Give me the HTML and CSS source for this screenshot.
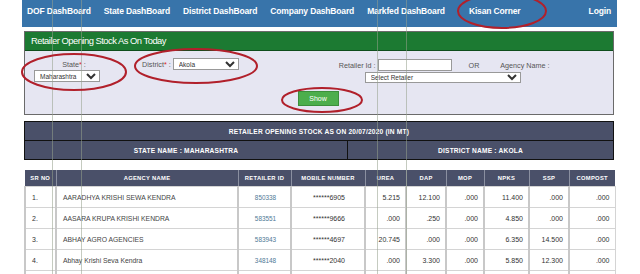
FILE: index.html
```html
<!DOCTYPE html>
<html lang="en">
<head>
    <meta charset="UTF-8">
    <meta name="viewport" content="width=device-width, initial-scale=1.0">
    <title>Retailer Opening Stock</title>
    <link rel="stylesheet" href="styles.css">
</head>
<body>

    <nav class="topnav">
        <a href="#">DOF DashBoard</a>
        <a href="#">State DashBoard</a>
        <a href="#">District DashBoard</a>
        <a href="#">Company DashBoard</a>
        <a href="#">Markfed DashBoard</a>
        <a href="#" class="kisan">Kisan Corner</a>
        <a href="#" class="login">Login</a>
    </nav>

    <div class="content">
        <div class="panel">
            <div class="panel-head">Retailer Opening Stock As On Today</div>
            <div class="panel-body">
                <div class="fields">
                    <div class="field-state">
                        <label>State<span class="req">*</span> :</label>
                        <select class="sel"><option>Maharashtra</option></select>
                    </div>
                    <div class="field-district">
                        <label>District<span class="req">*</span> :</label>
                        <select class="sel"><option>Akola</option></select>
                    </div>
                    <div class="field-retailer">
                        <div class="retailer-line">
                            <label>Retailer Id :</label>
                            <input type="text" class="txt">
                            <span class="or">OR</span>
                            <label>Agency Name :</label>
                        </div>
                        <select class="sel sel-wide"><option>Select Retailer</option></select>
                    </div>
                </div>
                <div class="actions">
                    <button class="btn-show">Show</button>
                </div>
            </div>
        </div>

        <table class="summary">
            <tr><td colspan="2">RETAILER OPENING STOCK AS ON 20/07/2020 (IN MT)</td></tr>
            <tr><td class="state-cell">STATE NAME : MAHARASHTRA</td><td>DISTRICT NAME : AKOLA</td></tr>
        </table>

        <table class="stock">
            <colgroup>
                <col style="width:31px"><col style="width:182px"><col style="width:53px"><col style="width:74px">
                <col style="width:41px"><col style="width:40px"><col style="width:38px"><col style="width:45px">
                <col style="width:40px"><col style="width:46px">
            </colgroup>
            <thead>
                <tr>
                    <th>SR NO</th><th>AGENCY NAME</th><th>RETAILER ID</th><th>MOBILE NUMBER</th>
                    <th>UREA</th><th>DAP</th><th>MOP</th><th>NPKS</th><th>SSP</th><th>COMPOST</th>
                </tr>
            </thead>
            <tbody>
                <tr>
                    <td>1.</td><td class="name">AARADHYA KRISHI SEWA KENDRA</td><td class="rid">850338</td><td class="mob">******6905</td>
                    <td class="num">5.215</td><td class="num">12.100</td><td class="num">.000</td><td class="num">11.400</td><td class="num">.000</td><td class="num">.000</td>
                </tr>
                <tr>
                    <td>2.</td><td class="name">AASARA KRUPA KRISHI KENDRA</td><td class="rid">583551</td><td class="mob">******9666</td>
                    <td class="num">.000</td><td class="num">.250</td><td class="num">.000</td><td class="num">4.850</td><td class="num">.000</td><td class="num">.000</td>
                </tr>
                <tr>
                    <td>3.</td><td class="name">ABHAY AGRO AGENCIES</td><td class="rid">583943</td><td class="mob">******4697</td>
                    <td class="num">20.745</td><td class="num">.000</td><td class="num">.000</td><td class="num">6.350</td><td class="num">14.500</td><td class="num">.000</td>
                </tr>
                <tr>
                    <td>4.</td><td class="name">Abhay Krishi Seva Kendra</td><td class="rid">348148</td><td class="mob">******2040</td>
                    <td class="num">.000</td><td class="num">3.300</td><td class="num">.000</td><td class="num">5.850</td><td class="num">12.300</td><td class="num">.000</td>
                </tr>
                <tr>
                    <td></td><td class="name"></td><td class="rid"></td><td></td>
                    <td class="num"></td><td class="num"></td><td class="num"></td><td class="num"></td><td class="num"></td><td class="num"></td>
                </tr>
            </tbody>
        </table>
    </div>

    <!-- guide lines and red marks drawn over the screenshot -->
    <div class="guide g1"></div>
    <div class="guide g2"></div>
    <div class="guide g3"></div>
    <div class="guide g4"></div>

    <svg class="marks" width="640" height="274" viewBox="0 0 640 274">
        <ellipse cx="502" cy="11" rx="44" ry="17" />
        <ellipse cx="74" cy="72" rx="52" ry="18" />
        <ellipse cx="196" cy="66" rx="61" ry="17" />
        <ellipse cx="322" cy="100" rx="40" ry="12" />
    </svg>

</body>
</html>
```

FILE: styles.css
```css
body {
    margin: 0;
    font-family: "Liberation Sans", Arial, sans-serif;
    background-color: #fff;
    width: 640px;
    height: 274px;
    overflow: hidden;
}
.topnav {
    margin-left: 22px;
    width: 595px;
    height: 27px;
    background-color: #3874aa;
    display: flex;
    gap: 13px;
    padding: 0 6px 0 5px;
    box-sizing: border-box;
    align-items: flex-start;
}
.topnav a {
    color: #fff;
    font-weight: bold;
    font-size: 8.5px;
    letter-spacing: -0.15px;
    text-decoration: none;
    padding-top: 6px;
}
.topnav .kisan {
    margin-left: 11px;
}
.topnav .login {
    margin-left: auto;
}
.content {
    margin-left: 24px;
    width: 590px;
}
.panel {
    margin-top: 4px;
    border: 1px solid #6a6a6a;
}
.panel-head {
    background-color: #1c7a32;
    color: #fff;
    font-size: 9.4px;
    letter-spacing: -0.5px;
    height: 18px;
    line-height: 18px;
    padding-left: 6px;
    border-bottom: 1px solid #0e4d1c;
}
.panel-body {
    background-color: #e6e6f2;
    height: 63px;
    font-size: 7.2px;
    color: #555;
}
.fields {
    display: flex;
    align-items: flex-start;
    height: 40px;
}
.req {
    color: #d22;
}
.sel {
    font-family: "Liberation Sans", Arial, sans-serif;
    font-size: 6.5px;
    width: 66px;
    height: 12px;
    padding: 0 1px;
    border: 1px solid #999;
    background-color: #fff;
    color: #333;
}
.field-state {
    margin-left: 9px;
    margin-top: 9px;
    display: flex;
    flex-direction: column;
    align-items: center;
    gap: 1px;
}
.field-state label {
    padding-left: 14px;
}
.field-district {
    margin-left: 42px;
    margin-top: 7px;
    display: flex;
    align-items: center;
    gap: 2px;
}
.field-retailer {
    margin-left: 100px;
    margin-top: 8px;
}
.retailer-line {
    display: flex;
    align-items: center;
}
.txt {
    width: 72px;
    height: 10px;
    margin-left: 2px;
    border: 1px solid #999;
    padding: 0;
}
.or {
    margin-left: 17px;
    margin-right: 21px;
}
.sel-wide {
    width: 156px;
    margin-left: 26px;
    margin-top: 1px;
    height: 11px;
}
.actions {
    display: flex;
    justify-content: center;
    padding-right: 2px;
}
.btn-show {
    width: 41px;
    height: 15px;
    background-color: #4cae4c;
    border: 1px solid #3b8f3b;
    color: #fff;
    font-family: "Liberation Sans", Arial, sans-serif;
    font-size: 7px;
    padding: 0;
}
.summary {
    margin-top: 6px;
    width: 590px;
    border-collapse: collapse;
    background-color: #4a5069;
    color: #fff;
    font-weight: bold;
    font-size: 6.6px;
    letter-spacing: 0.2px;
}
.summary td {
    border: 1px solid #111;
    height: 18px;
    padding: 0;
    text-align: center;
}
.summary .state-cell {
    width: 322px;
}
.stock {
    margin-top: 10px;
    width: 590px;
    table-layout: fixed;
    border-collapse: collapse;
    font-size: 7px;
    color: #333;
}
.stock th {
    background-color: #4a5069;
    color: #fff;
    font-size: 5.8px;
    letter-spacing: 0.3px;
    height: 16px;
    padding: 0;
    border-left: 1px solid #8a8fa0;
}
.stock th:first-child {
    border-left: none;
}
.stock td {
    height: 20px;
    padding: 0 4px 0 6px;
    border: 1px solid #d4d4d4;
    border-left: 2px solid #c8c8c8;
    white-space: nowrap;
    overflow: hidden;
}
.stock td.name {
    color: #444;
    font-size: 6.8px;
}
.stock td.rid {
    text-align: center;
    color: #4f7a96;
    font-size: 6.4px;
}
.stock td.mob {
    text-align: center;
}
.stock td.num {
    text-align: right;
    padding-right: 5px;
}
.stock tbody {
    border: 1px solid #999;
}
.guide {
    position: absolute;
    top: 0;
    width: 1px;
    height: 274px;
    background-color: rgba(150, 160, 140, 0.55);
}
.g1 { left: 52px; }
.g2 { left: 81px; }
.g3 { left: 377px; }
.g4 { left: 406px; }
.marks {
    position: absolute;
    top: 0;
    left: 0;
    pointer-events: none;
}
.marks ellipse {
    fill: none;
    stroke: #b1202b;
    stroke-width: 2;
}
```
